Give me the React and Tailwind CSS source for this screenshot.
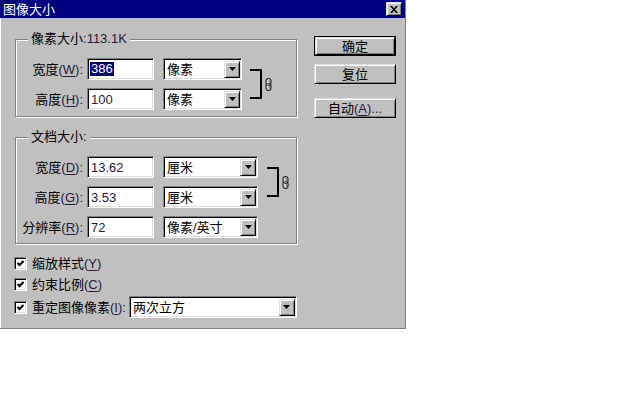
const sunken =
  'border border-t-[#808080] border-l-[#808080] border-r-white border-b-white shadow-[inset_1px_1px_0_#000,inset_-1px_-1px_0_#dfdfdf]';
const raised =
  'border border-t-[#dfdfdf] border-l-[#dfdfdf] border-r-black border-b-black shadow-[inset_1px_1px_0_#fff,inset_-1px_-1px_0_#808080]';
const groove = 'border border-[#808080] shadow-[inset_1px_1px_0_#fff,1px_1px_0_#fff]';
const latin = 'text-[#2a1838]';

function Key({ k }) {
  return (
    <span className={latin}>
      (<span className="underline underline-offset-2">{k}</span>)
    </span>
  );
}

function Arrow() {
  return (
    <svg width="7" height="4" viewBox="0 0 7 4">
      <path d="M0 0h7L3.5 4z" fill="#000" />
    </svg>
  );
}

function Combo({ width, text }) {
  return (
    <div className={`flex h-[22px] items-center bg-white ${sunken} ${width}`}>
      <span className="pl-[3px]">{text}</span>
      <div className={`ml-auto mr-[1px] flex h-[17px] w-[16px] items-center justify-center bg-[#c0c0c0] ${raised}`}>
        <Arrow />
      </div>
    </div>
  );
}

function Field({ label, k, value, selected, unit, unitWidth }) {
  return (
    <div className="flex h-[22px] items-center">
      <div className="w-[67px] whitespace-nowrap text-right">
        {label}
        <Key k={k} />
        <span className={latin}>:</span>
      </div>
      <div className={`ml-[4px] flex h-[22px] w-[67px] items-center bg-white ${sunken}`}>
        {selected ? (
          <span className="ml-[2px] bg-[#000080] px-[1px] leading-[14px] text-white">{value}</span>
        ) : (
          <span className={`ml-[3px] ${latin}`}>{value}</span>
        )}
      </div>
      <div className="ml-[9px]">
        <Combo width={unitWidth} text={unit} />
      </div>
    </div>
  );
}

function Chain() {
  return (
    <svg width="7" height="13" viewBox="0 0 7 13">
      <rect x="1" y="0.5" width="5" height="7" rx="2.5" fill="none" stroke="#303030" strokeWidth="1.2" />
      <rect x="1" y="5.5" width="5" height="7" rx="2.5" fill="none" stroke="#303030" strokeWidth="1.2" />
      <path d="M2.6 2.5v3M2.6 7.5v3" stroke="#e8e8e8" />
      <path d="M4.4 2.5v3M4.4 7.5v3" stroke="#808080" />
    </svg>
  );
}

function Group({ title, className, children }) {
  return (
    <div className={`relative ml-[14px] w-[282px] ${groove} ${className}`}>
      <span className="absolute -top-[8px] left-[12px] bg-[#c0c0c0] px-[3px] leading-[14px]">{title}</span>
      {children}
    </div>
  );
}

function Check({ children, className = '' }) {
  return (
    <div className={`flex items-center ${className}`}>
      <div className={`flex h-[13px] w-[13px] items-center justify-center bg-white ${sunken}`}>
        <svg width="7" height="7" viewBox="0 0 7 7">
          <path d="M0.5 3l2 2 4-4" fill="none" stroke="#000" strokeWidth="2" />
        </svg>
      </div>
      <span className="ml-[5px] whitespace-nowrap">{children}</span>
    </div>
  );
}

function Button({ children, isDefault, className = '' }) {
  return (
    <div className={`h-[20px] w-[82px] ${isDefault ? 'border border-black' : ''} ${className}`}>
      <div className={`flex h-full w-full items-center justify-center bg-[#c0c0c0] ${raised}`}>{children}</div>
    </div>
  );
}

export default function App() {
  return (
    <div className="h-[400px] w-[640px] bg-white font-['Liberation_Sans','Noto_Sans_CJK_SC',sans-serif] text-[13px] leading-none text-black">
      <div className="h-[329px] w-[406px] border-b border-r border-[#808080] bg-[#c0c0c0]">
        <div className="flex h-[18px] items-center bg-[#000080] pl-[3px] pr-[3px] text-white">
          <span>图像大小</span>
          <div className={`ml-auto flex h-[14px] w-[16px] items-center justify-center bg-[#c0c0c0] ${raised}`}>
            <svg width="8" height="7" viewBox="0 0 8 7">
              <path d="M0 0h2l2 2.4L6 0h2L5 3.5 8 7H6L4 4.6 2 7H0l3-3.5z" fill="#000" />
            </svg>
          </div>
        </div>

        <div className="flex h-[310px] border-l border-white">
          <div className="w-[298px] shrink-0">
            <Group
              title={
                <>
                  像素大小<span className={latin}>:113.1K</span>
                </>
              }
              className="mt-[21px] pb-[6px] pt-[18px]"
            >
              <div className="flex items-center">
                <div className="flex flex-col gap-[8px]">
                  <Field label="宽度" k="W" value="386" selected unit="像素" unitWidth="w-[79px]" />
                  <Field label="高度" k="H" value="100" unit="像素" unitWidth="w-[79px]" />
                </div>
                <div className="ml-[8px] h-[30px] w-[12px] border-y-2 border-r-2 border-black" />
                <div className="ml-[3px] flex">
                  <Chain />
                </div>
              </div>
            </Group>

            <Group
              title={
                <>
                  文档大小<span className={latin}>:</span>
                </>
              }
              className="mt-[20px] pb-[5px] pt-[18px]"
            >
              <div className="flex flex-col gap-[8px]">
                <div className="flex items-center">
                  <div className="flex flex-col gap-[8px]">
                    <Field label="宽度" k="D" value="13.62" unit="厘米" unitWidth="w-[95px]" />
                    <Field label="高度" k="G" value="3.53" unit="厘米" unitWidth="w-[95px]" />
                  </div>
                  <div className="ml-[9px] h-[30px] w-[12px] border-y-2 border-r-2 border-black" />
                  <div className="ml-[3px] flex">
                    <Chain />
                  </div>
                </div>
                <Field label="分辨率" k="R" value="72" unit="像素/英寸" unitWidth="w-[95px]" />
              </div>
            </Group>

            <div className="ml-[13px]">
              <Check className="mt-[13px]">
                缩放样式
                <Key k="Y" />
              </Check>
              <Check className="mt-[8px]">
                约束比例
                <Key k="C" />
              </Check>
              <div className="mt-[5px] flex h-[22px] items-center">
                <Check>
                  重定图像像素
                  <Key k="I" />
                  <span className={latin}>:</span>
                </Check>
                <div className="ml-[3px]">
                  <Combo width="w-[168px]" text="两次立方" />
                </div>
              </div>
            </div>
          </div>

          <div className="pl-[15px] pt-[18px]">
            <Button isDefault>确定</Button>
            <Button className="mt-[8px]">复位</Button>
            <Button className="mt-[14px]">
              自动
              <Key k="A" />
              <span className={latin}>...</span>
            </Button>
          </div>
        </div>
      </div>
    </div>
  );
}
